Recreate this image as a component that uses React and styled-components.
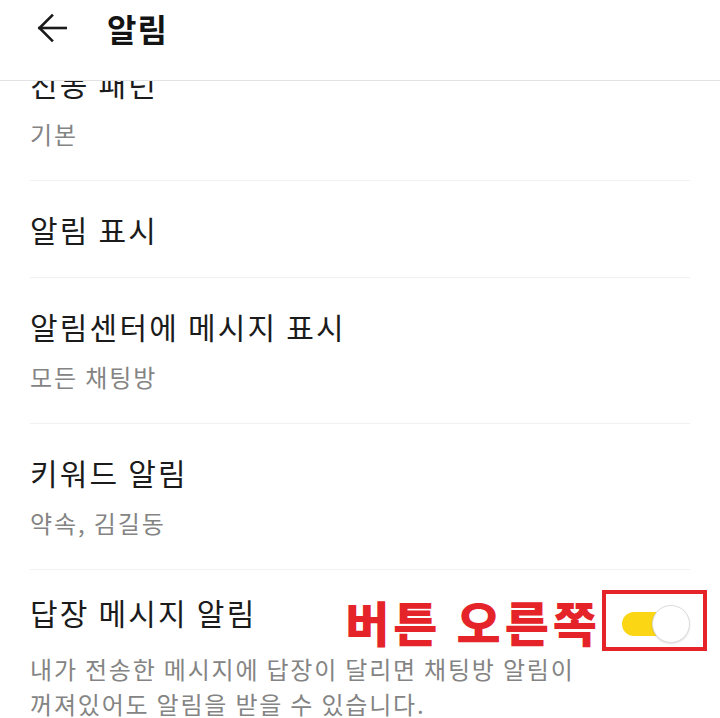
import React from "react";
import styled, { createGlobalStyle } from "styled-components";

const GlobalStyle = createGlobalStyle`
    html, body { margin: 0; padding: 0; background: #ffffff; }
    body { font-family: "Noto Sans CJK KR", "Noto Sans", sans-serif; }
`;

const Screen = styled.div`
    width: 720px; height: 718px;
    display: flex; flex-direction: column;
    overflow: hidden;
    background: #ffffff;
`;

const Header = styled.header`
    position: relative; z-index: 1;
    height: 81px;
    box-sizing: border-box;
    padding: 10px 0 0 37px;
    display: flex; align-items: flex-start;
    background: #ffffff;
    border-bottom: 1px solid #e2e2e2;
`;

const HeaderRow = styled.div`
    height: 36px;
    display: flex; align-items: center;
    gap: 40px;
`;

const Title = styled.h1`
    margin: 0;
    font-size: 32px; font-weight: 700; line-height: 36px;
    letter-spacing: 1px;
    color: #141414;
`;

const Viewport = styled.div`
    flex: 1;
    overflow: hidden;
`;

const List = styled.div`
    margin-top: -46px;
`;

const Item = styled.div`
    margin: 0 30px;
    padding: 28px 0 ${p => (p.$last ? "0" : "28px")};
    border-bottom: ${p => (p.$last ? "none" : "1px solid #f1f1f1")};
`;

const ItemTitle = styled.div`
    font-size: 30px; line-height: 40px;
    letter-spacing: 2.2px;
    color: #1b1b1b;
`;

const ItemSub = styled.div`
    margin-top: 13px;
    font-size: 24px; line-height: 36px;
    letter-spacing: 1.9px;
    color: #848484;
`;

const ToggleRow = styled.div`
    display: flex; align-items: center;
    margin: -8px -17px 0 0;
    & > ${ItemTitle} { flex: 1; margin-bottom: 18px; }
`;

const Desc = styled.div`
    font-size: 24px; line-height: 35px;
    letter-spacing: 1.8px;
    color: #848484;
`;

const Note = styled.span`
    font-size: 48px; font-weight: 900; line-height: 50px;
    letter-spacing: 4px;
    color: #e5242a;
    margin-right: 1px;
`;

const NoteBox = styled.div`
    width: 105px; height: 61px;
    box-sizing: border-box;
    border: 4px solid #e5242a;
    padding: 11px 0 0 16px;
`;

const Toggle = styled.div`
    position: relative;
    width: 68px; height: 38px;
`;

const Track = styled.div`
    position: absolute; left: 0; top: 7px;
    width: 48px; height: 24px;
    border-radius: 12px;
    background: #fad614;
`;

const Knob = styled.div`
    position: absolute; right: 0; top: 0;
    width: 38px; height: 38px;
    box-sizing: border-box;
    border-radius: 50%;
    background: #ffffff;
    border: 1px solid #dcdcdc;
    box-shadow: 0 1px 2px rgba(0,0,0,0.12);
`;

function BackArrow() {
    return (
        <svg width="30" height="30" viewBox="0 0 30 30" fill="none" stroke="#1a1a1a" strokeWidth="2.6" strokeLinecap="square">
            <path d="M2.5 15 H29" />
            <path d="M15 2.5 L2.5 15 L15 27.5" />
        </svg>
    );
}

const items = [
    { title: "진동 패턴", sub: "기본" },
    { title: "알림 표시" },
    { title: "알림센터에 메시지 표시", sub: "모든 채팅방" },
    { title: "키워드 알림", sub: "약속, 김길동" },
];

export default function App() {
    return (
        <Screen>
            <GlobalStyle />
            <Header>
                <HeaderRow>
                    <BackArrow />
                    <Title>알림</Title>
                </HeaderRow>
            </Header>
            <Viewport>
                <List>
                    {items.map(it => (
                        <Item key={it.title}>
                            <ItemTitle>{it.title}</ItemTitle>
                            {it.sub && <ItemSub>{it.sub}</ItemSub>}
                        </Item>
                    ))}
                    <Item $last>
                        <ToggleRow>
                            <ItemTitle>답장 메시지 알림</ItemTitle>
                            <Note>버튼 오른쪽</Note>
                            <NoteBox>
                                <Toggle>
                                    <Track />
                                    <Knob />
                                </Toggle>
                            </NoteBox>
                        </ToggleRow>
                        <Desc>
                            내가 전송한 메시지에 답장이 달리면 채팅방 알림이<br />
                            꺼져있어도 알림을 받을 수 있습니다.
                        </Desc>
                    </Item>
                </List>
            </Viewport>
        </Screen>
    );
}
